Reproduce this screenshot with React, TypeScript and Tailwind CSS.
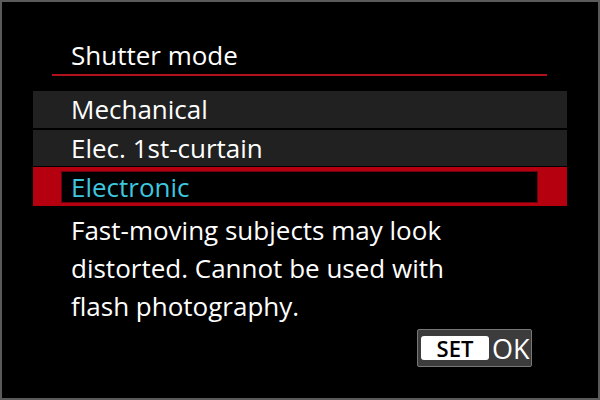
import React from 'react';

const options = ['Mechanical', 'Elec. 1st-curtain', 'Electronic'];

export default function App() {
  const selected = 2;

  return (
    <div className="w-[600px] h-[400px] bg-black border-2 border-[#5a5a5a] text-white font-['Open_Sans','Noto_Sans',sans-serif] flex flex-col">
      <div className="pl-[69px] pt-[36px] text-[26px] leading-[34px]">Shutter mode</div>
      <div className="ml-[50px] w-[495px] h-[2px] mt-[2px] bg-[#b3101e]" />

      <div className="ml-[31px] w-[534px] mt-[15px] flex flex-col">
        {options.map((opt, i) =>
          i === selected ? (
            <div key={opt} className="h-[39px] bg-[#b5000f] pl-[28px] pr-[29px] pt-[4px] pb-[3px] flex">
              <div className="flex-1 bg-black border border-[#6e0010] pl-[9px] flex items-center text-[26px] text-[#3ec6df]">
                {opt}
              </div>
            </div>
          ) : (
            <div
              key={opt}
              className={`bg-[#212121] pl-[38px] flex items-center text-[26px] ${i === 0 ? 'h-[37px] mb-[2px]' : 'h-[36px] mb-[1px]'}`}
            >
              {opt}
            </div>
          )
        )}
      </div>

      <div className="pl-[69px] pt-[5px] text-[26px] leading-[38px] whitespace-nowrap">
        Fast-moving subjects may look<br />
        distorted. Cannot be used with<br />
        flash photography.
      </div>

      <div className="flex justify-end pr-[66px] mt-[4px]">
        <div className="w-[115px] h-[38px] bg-[#3c3c3c] border border-[#777] rounded-[2px] flex items-center pl-[3px] gap-[3px]">
          <div className="w-[68px] h-[24px] bg-white rounded-[3px] flex items-center justify-center text-black font-semibold text-[22px] leading-none">
            SET
          </div>
          <div className="text-[27px] leading-none text-white">OK</div>
        </div>
      </div>
    </div>
  );
}
